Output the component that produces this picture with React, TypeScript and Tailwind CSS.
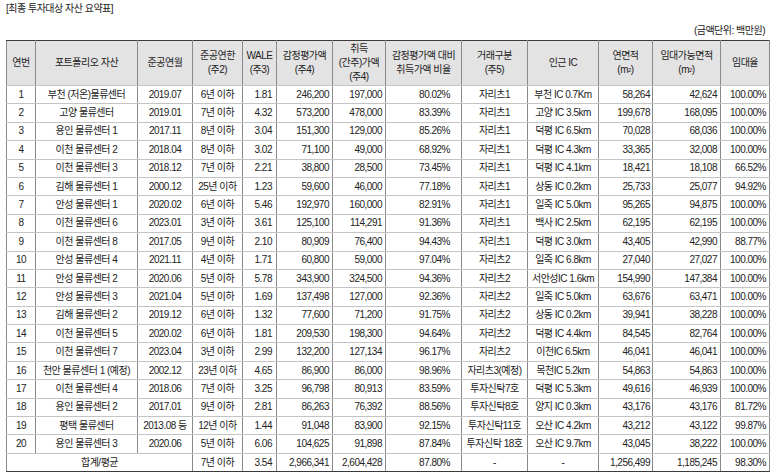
const rows: string[][] = [
  ['1', '부천 (저온)물류센터', '2019.07', '6년 이하', '1.81', '246,200', '197,000', '80.02%', '자리츠1', '부천 IC 0.7Km', '58,264', '42,624', '100.00%'],
  ['2', '고양 물류센터', '2019.01', '7년 이하', '4.32', '573,200', '478,000', '83.39%', '자리츠1', '고양 IC 3.5km', '199,678', '168,095', '100.00%'],
  ['3', '용인 물류센터 1', '2017.11', '8년 이하', '3.04', '151,300', '129,000', '85.26%', '자리츠1', '덕평 IC 6.5km', '70,028', '68,036', '100.00%'],
  ['4', '이천 물류센터 2', '2018.04', '8년 이하', '3.02', '71,100', '49,000', '68.92%', '자리츠1', '덕평 IC 4.3km', '33,365', '32,008', '100.00%'],
  ['5', '이천 물류센터 3', '2018.12', '7년 이하', '2.21', '38,800', '28,500', '73.45%', '자리츠1', '덕평 IC 4.1km', '18,421', '18,108', '66.52%'],
  ['6', '김해 물류센터 1', '2000.12', '25년 이하', '1.23', '59,600', '46,000', '77.18%', '자리츠1', '상동 IC 0.2km', '25,733', '25,077', '94.92%'],
  ['7', '안성 물류센터 1', '2020.02', '6년 이하', '5.46', '192,970', '160,000', '82.91%', '자리츠1', '일죽 IC 5.0km', '95,265', '94,875', '100.00%'],
  ['8', '이천 물류센터 6', '2023.01', '3년 이하', '3.61', '125,100', '114,291', '91.36%', '자리츠1', '백사 IC 2.5km', '62,195', '62,195', '100.00%'],
  ['9', '이천 물류센터 8', '2017.05', '9년 이하', '2.10', '80,909', '76,400', '94.43%', '자리츠1', '덕평 IC 3.0km', '43,405', '42,990', '88.77%'],
  ['10', '안성 물류센터 4', '2021.11', '4년 이하', '1.71', '60,800', '59,000', '97.04%', '자리츠2', '일죽 IC 6.8km', '27,040', '27,027', '100.00%'],
  ['11', '안성 물류센터 2', '2020.06', '5년 이하', '5.78', '343,900', '324,500', '94.36%', '자리츠2', '서안성IC 1.6km', '154,990', '147,384', '100.00%'],
  ['12', '안성 물류센터 3', '2021.04', '5년 이하', '1.69', '137,498', '127,000', '92.36%', '자리츠2', '일죽 IC 5.0km', '63,676', '63,471', '100.00%'],
  ['13', '김해 물류센터 2', '2019.12', '6년 이하', '1.32', '77,600', '71,200', '91.75%', '자리츠2', '상동 IC 0.2km', '39,941', '38,228', '100.00%'],
  ['14', '이천 물류센터 5', '2020.02', '6년 이하', '1.81', '209,530', '198,300', '94.64%', '자리츠2', '덕평 IC 4.4km', '84,545', '82,764', '100.00%'],
  ['15', '이천 물류센터 7', '2023.04', '3년 이하', '2.99', '132,200', '127,134', '96.17%', '자리츠2', '이천IC 6.5km', '46,041', '46,041', '100.00%'],
  ['16', '천안 물류센터 1 (예정)', '2002.12', '23년 이하', '4.65', '86,900', '86,000', '98.96%', '자리츠3(예정)', '목천IC 5.2km', '54,863', '54,863', '100.00%'],
  ['17', '이천 물류센터 4', '2018.06', '7년 이하', '3.25', '96,798', '80,913', '83.59%', '투자신탁7호', '덕평 IC 5.3km', '49,616', '46,939', '100.00%'],
  ['18', '용인 물류센터 2', '2017.01', '9년 이하', '2.81', '86,263', '76,392', '88.56%', '투자신탁8호', '양지 IC 0.3km', '43,176', '43,176', '81.72%'],
  ['19', '평택 물류센터', '2013.08 등', '12년 이하', '1.44', '91,048', '83,900', '92.15%', '투자신탁11호', '오산 IC 4.2km', '43,212', '43,122', '99.87%'],
  ['20', '용인 물류센터 3', '2020.06', '5년 이하', '6.06', '104,625', '91,898', '87.84%', '투자신탁 18호', '오산 IC 9.7km', '43,045', '38,222', '100.00%'],
];

const widths = [29, 102, 55, 50, 34, 56, 53, 76, 66, 71, 54, 68, 49];

// per-column alignment classes
const align = [
  'text-center',
  'text-center',
  'text-center',
  'text-center',
  'text-right pr-[4px]',
  'text-right pr-[3px]',
  'text-right pr-[3px]',
  'text-right pr-[11px]',
  'text-center',
  'text-center',
  'text-right pr-[2px]',
  'text-right pr-[3px]',
  'text-right pr-[3px]',
];

const cell = 'border-x border-x-[#8a8a8a] border-y border-y-[#c4c4c4] whitespace-nowrap p-0';

function Sq() {
  return (
    <>
      (m<sup className="text-[6px] relative -top-[1px]">2</sup>)
    </>
  );
}

export default function App() {
  const headers: React.ReactNode[] = [
    '연번',
    '포트폴리오 자산',
    '준공연월',
    <>준공연한<br />(주2)</>,
    <>WALE<br />(주3)</>,
    <>감정평가액<br />(주4)</>,
    <>취득<br />(간주)가액<br />(주4)</>,
    <>감정평가액 대비<br />취득가액 비율</>,
    <>거래구분<br />(주5)</>,
    '인근 IC',
    <>연면적<br /><Sq /></>,
    <>임대가능면적<br /><Sq /></>,
    '임대율',
  ];

  return (
    <div
      className="w-[773px] h-[474px] bg-white pl-[6px] pr-[4px] pt-[1px] text-[10px] text-[#222] tracking-[-0.5px]"
      style={{ fontFamily: '"Liberation Sans", "Noto Sans CJK KR", sans-serif' }}
    >
      <div className="h-[16px] leading-[16px]">[최종 투자대상 자산 요약표]</div>
      <div className="h-[23px] pt-[5px] leading-[18px] text-right pr-[4px]">(금액단위: 백만원)</div>

      <table className="table-fixed border-collapse w-[763px] border border-[#3a3a3a]">
        <colgroup>
          {widths.map((w, i) => (
            <col key={i} style={{ width: w }} />
          ))}
        </colgroup>
        <thead>
          <tr className="h-[45px] bg-[#e3e3e3]">
            {headers.map((h, i) => (
              <th
                key={i}
                className={`${cell} border-t-[#3a3a3a] font-normal text-center leading-[14px] align-middle`}
              >
                {h}
              </th>
            ))}
          </tr>
        </thead>
        <tbody>
          {rows.map((r) => (
            <tr key={r[0]} className="h-[18.4px]">
              {r.map((v, i) => (
                <td key={i} className={`${cell} ${align[i]} leading-[12px]`}>
                  {v}
                </td>
              ))}
            </tr>
          ))}
          <tr className="h-[18.4px]">
            <td colSpan={3} className={`${cell} text-center leading-[12px] border-b-[#3a3a3a]`}>
              합계/평균
            </td>
            {['7년 이하', '3.54', '2,966,341', '2,604,428', '87.80%', '-', '-', '1,256,499', '1,185,245', '98.30%'].map(
              (v, i) => (
                <td key={i} className={`${cell} ${align[i + 3]} leading-[12px] border-b-[#3a3a3a]`}>
                  {v}
                </td>
              ),
            )}
          </tr>
        </tbody>
      </table>
    </div>
  );
}
